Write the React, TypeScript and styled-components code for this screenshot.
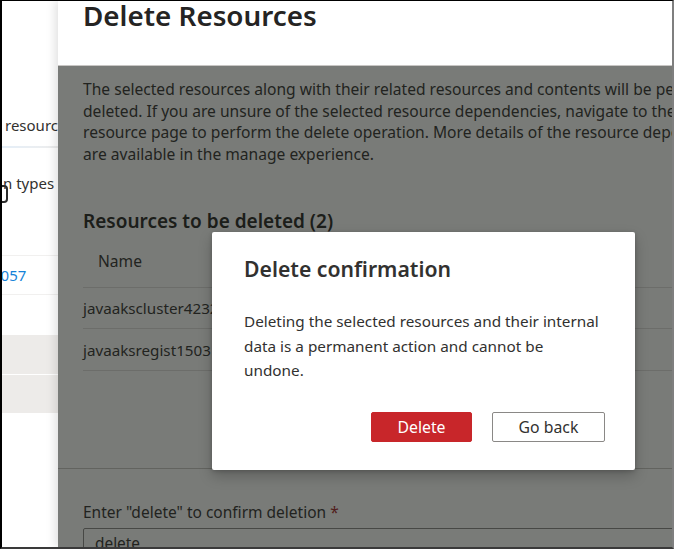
import React from "react";
import styled, { createGlobalStyle } from "styled-components";

const FONT = `"Noto Sans", "Open Sans", "Liberation Sans", sans-serif`;

const Global = createGlobalStyle`
  html, body { margin: 0; padding: 0; background: #ffffff; }
  * { box-sizing: border-box; }
`;

const Frame = styled.div`
  position: relative;
  width: 674px;
  height: 549px;
  display: flex;
  overflow: hidden;
  border-top: 1px solid #000;
  border-left: 2px solid #000;
  border-right: 2px solid #7f7f7f;
  border-bottom: 2px solid #3a3a3a;
  font-family: ${FONT};
  color: #323130;
  background: #fff;
`;

const BackPage = styled.div`
  width: 56px;
  flex: none;
  display: flex;
  flex-direction: column;
  overflow: hidden;
  background: #fff;
  padding-top: 113px;
`;

const BackText = styled.div<{ $indent: number; $gap?: number }>`
  font-size: 15px;
  line-height: 22px;
  white-space: nowrap;
  padding-left: ${(p) => p.$indent}px;
  margin-top: ${(p) => p.$gap ?? 0}px;
  color: #323130;
`;

const BackDivider = styled.div`
  height: 2px;
  margin-top: 10px;
  background: linear-gradient(90deg, #e4eef8 0%, #eaeef2 55%, #ececec 100%);
`;

const ToggleRow = styled.div`
  height: 26px;
  display: flex;
  flex-direction: column;
`;

const ToggleEdge = styled.div`
  width: 9px;
  height: 18px;
  margin-top: -9px;
  margin-left: -3px;
  border: 2px solid #2b2b2b;
  border-radius: 4px;
`;

const BackRow = styled.div<{ $shade?: boolean; $height: number; $gap?: number; $line?: boolean }>`
  height: ${(p) => p.$height}px;
  margin-top: ${(p) => p.$gap ?? 0}px;
  display: flex;
  align-items: center;
  background: ${(p) => (p.$shade ? "#edebe9" : "#fff")};
  border-bottom: ${(p) =>
    p.$line ? `1px solid ${p.$shade ? "#ffffff" : "#f1f0ef"}` : "none"};
`;

const BackLink = styled.span`
  font-size: 15px;
  color: #1683d8;
  margin-left: -10px;
`;

const Panel = styled.div`
  flex: 1;
  min-width: 0;
  display: flex;
  flex-direction: column;
  background: #fff;
  box-shadow: -3px 0 9px rgba(0, 0, 0, 0.12);
  position: relative;
  z-index: 1;
`;

const PanelHeader = styled.div`
  height: 65px;
  flex: none;
  border-bottom: 1px solid #c8c6c4;
  padding-left: 25px;
`;

const PanelTitle = styled.h1`
  margin: 0;
  margin-top: -6px;
  font-size: 27.8px;
  line-height: 40px;
  font-weight: 600;
  color: #252423;
  white-space: nowrap;
`;

const Dimmed = styled.div`
  position: relative;
  flex: 1;
  display: flex;
  flex-direction: column;
  overflow: hidden;
`;

const Scrim = styled.div`
  position: absolute;
  inset: 0;
  background: rgba(22, 26, 20, 0.575);
  z-index: 2;
`;

const Body = styled.div`
  height: 402px;
  flex: none;
  padding: 13px 0 0 25px;
`;

const Lead = styled.p`
  margin: 0;
  font-size: 15.6px;
  line-height: 21.6px;
  white-space: nowrap;
  color: #323130;
`;

const SectionTitle = styled.h2`
  margin: 44px 0 0;
  font-size: 19px;
  line-height: 24px;
  font-weight: 600;
  color: #252423;
`;

const Table = styled.div`
  width: 700px;
  display: flex;
  flex-direction: column;
`;

const HeadRow = styled.div`
  height: 55px;
  display: flex;
  align-items: center;
  padding-left: 15px;
  padding-top: 1px;
  font-size: 15.6px;
  border-bottom: 1px solid #e1dfdd;
`;

const DataRow = styled.div<{ $height: number }>`
  height: ${(p) => p.$height}px;
  display: flex;
  align-items: center;
  font-size: 15.2px;
  white-space: nowrap;
  border-bottom: 1px solid #e1dfdd;
`;

const Footer = styled.div`
  flex: 1;
  border-top: 1px solid #c8c6c4;
  padding: 33px 0 0 25px;
`;

const FieldLabel = styled.label`
  display: block;
  font-size: 15.5px;
  line-height: 20px;
  white-space: nowrap;
  color: #323130;
`;

const Required = styled.span`
  color: #a4262c;
  margin-left: 4px;
`;

const TextInput = styled.div`
  margin-top: 6px;
  width: 640px;
  height: 32px;
  border: 1px solid #8a8886;
  border-radius: 2px;
  padding: 5px 0 0 11px;
  font-size: 15.4px;
  line-height: 20px;
  color: #323130;
`;

const Dialog = styled.div`
  position: absolute;
  left: 210px;
  top: 231px;
  width: 423px;
  height: 238px;
  z-index: 5;
  background: #fff;
  border-radius: 2px;
  box-shadow: 0 6px 14px rgba(0, 0, 0, 0.22), 0 1px 4px rgba(0, 0, 0, 0.18);
  display: flex;
  flex-direction: column;
  padding: 23px 30px 0 32px;
`;

const DialogTitle = styled.h2`
  margin: 0;
  font-size: 21.2px;
  line-height: 28px;
  font-weight: 600;
  color: #323130;
`;

const DialogText = styled.p`
  margin: 26px 0 0;
  font-size: 15.3px;
  line-height: 24.5px;
  color: #323130;
`;

const Actions = styled.div`
  margin-top: 29px;
  display: flex;
  justify-content: flex-end;
  gap: 20px;
`;

const Button = styled.button<{ $primary?: boolean; $width: number }>`
  width: ${(p) => p.$width}px;
  height: 30px;
  border-radius: 2px;
  font-family: ${FONT};
  font-size: 15.8px;
  padding: 0;
  cursor: pointer;
  border: 1px solid ${(p) => (p.$primary ? "#c8262a" : "#8a8886")};
  background: ${(p) => (p.$primary ? "#c8262a" : "#ffffff")};
  color: ${(p) => (p.$primary ? "#ffffff" : "#323130")};
`;

export default function App() {
  return (
    <>
      <Global />
      <Frame>
        <BackPage>
          <BackText $indent={3}>resources</BackText>
          <BackDivider />
          <BackText $indent={1} $gap={24}>
            n types
          </BackText>
          <ToggleRow>
            <ToggleEdge />
          </ToggleRow>
          <BackRow $height={0} $gap={35} $line />
          <BackRow $height={39} $line>
            <BackLink>2057</BackLink>
          </BackRow>
          <BackRow $height={40} />
          <BackRow $shade $height={40} $line />
          <BackRow $shade $height={38} />
        </BackPage>
        <Panel>
          <PanelHeader>
            <PanelTitle>Delete Resources</PanelTitle>
          </PanelHeader>
          <Dimmed>
            <Body>
              <Lead>
                The selected resources along with their related resources and contents will be permanently
                <br />
                deleted. If you are unsure of the selected resource dependencies, navigate to the individual
                <br />
                resource page to perform the delete operation. More details of the resource dependencies
                <br />
                are available in the manage experience.
              </Lead>
              <SectionTitle>Resources to be deleted (2)</SectionTitle>
              <Table>
                <HeadRow>Name</HeadRow>
                <DataRow $height={41}>javaakscluster4232</DataRow>
                <DataRow $height={42}>javaaksregist1503</DataRow>
              </Table>
            </Body>
            <Footer>
              <FieldLabel>
                Enter "delete" to confirm deletion<Required>*</Required>
              </FieldLabel>
              <TextInput>delete</TextInput>
            </Footer>
            <Scrim />
          </Dimmed>
        </Panel>
        <Dialog role="dialog" aria-label="Delete confirmation">
          <DialogTitle>Delete confirmation</DialogTitle>
          <DialogText>
            Deleting the selected resources and their internal data is a permanent action and cannot be undone.
          </DialogText>
          <Actions>
            <Button $primary $width={101}>
              Delete
            </Button>
            <Button $width={113}>Go back</Button>
          </Actions>
        </Dialog>
      </Frame>
    </>
  );
}
